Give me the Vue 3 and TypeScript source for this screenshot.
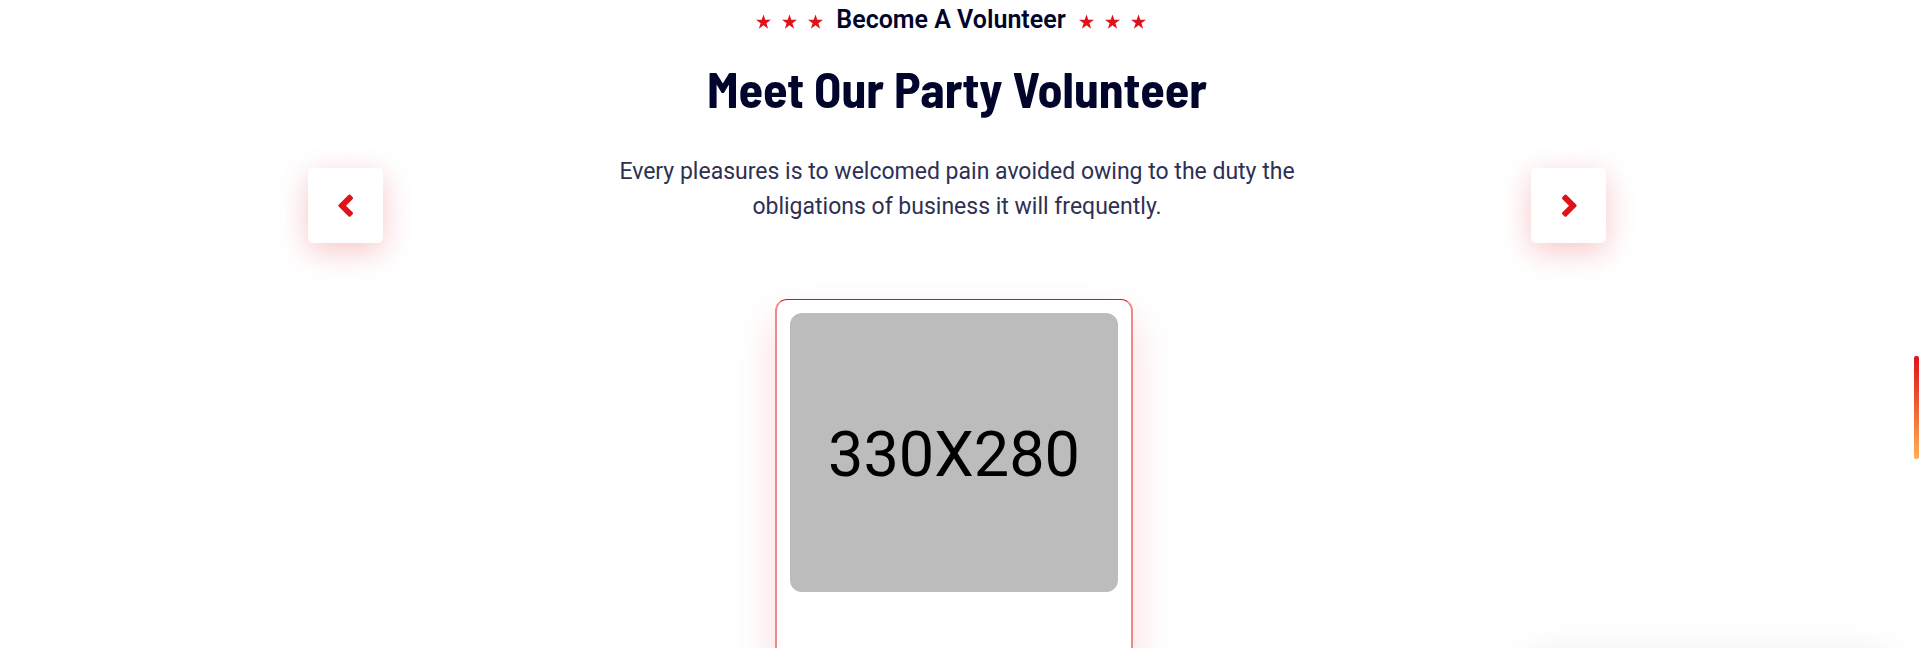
<script setup lang="ts">
import { ref } from 'vue'

interface Volunteer {
  id: number
  photo: string
}

const volunteers: Volunteer[] = [{ id: 1, photo: '330X280' }]
const current = ref(0)

function step(delta: number): void {
  current.value = (current.value + delta + volunteers.length) % volunteers.length
}
</script>

<template>
  <div class="page">
    <main class="volunteers">
      <header class="top">
        <button class="nav" type="button" aria-label="Previous volunteer" @click="step(-1)">
          <svg viewBox="0 0 16 24" aria-hidden="true">
            <path d="M.9 10.6 10.4 1.1q1.1-1.1 2.2 0l1.9 1.9q1.1 1.1 0 2.2L8 11.7l6.5 6.5q1.1 1.1 0 2.2l-1.9 1.9q-1.1 1.1-2.2 0L.9 12.8q-1.1-1.1 0-2.2z" />
          </svg>
        </button>

        <div class="intro">
          <p class="subtitle">
            <span class="stars" aria-hidden="true">
              <svg v-for="n in 3" :key="n" viewBox="0 0 24 24">
                <path d="M12 .6l2.83 8.7H24l-7.4 5.4 2.8 8.7-7.4-5.4-7.4 5.4 2.8-8.7L0 9.3h9.17z" />
              </svg>
            </span>
            <span>Become A Volunteer</span>
            <span class="stars" aria-hidden="true">
              <svg v-for="n in 3" :key="n" viewBox="0 0 24 24">
                <path d="M12 .6l2.83 8.7H24l-7.4 5.4 2.8 8.7-7.4-5.4-7.4 5.4 2.8-8.7L0 9.3h9.17z" />
              </svg>
            </span>
          </p>
          <h2>Meet Our Party Volunteer</h2>
          <p class="text">
            Every pleasures is to welcomed pain avoided owing to the duty the obligations of
            business it will frequently.
          </p>
        </div>

        <button class="nav" type="button" aria-label="Next volunteer" @click="step(1)">
          <svg viewBox="0 0 16 24" aria-hidden="true">
            <path d="M15.1 10.6 5.6 1.1q-1.1-1.1-2.2 0L1.5 3q-1.1 1.1 0 2.2L8 11.7l-6.5 6.5q-1.1 1.1 0 2.2l1.9 1.9q1.1 1.1 2.2 0l9.5-9.5q1.1-1.1 0-2.2z" />
          </svg>
        </button>
      </header>

      <article class="card">
        <div class="photo">{{ volunteers[current].photo }}</div>
      </article>
    </main>
    <div class="scroll-thumb"></div>
    <div class="popup"></div>
  </div>
</template>

<style>
body {
  margin: 0;
  background: #fff;
}
</style>

<style scoped>
.page {
  position: relative;
  height: 100vh;
  overflow: hidden;
  padding-right: 5px;
  box-sizing: border-box;
  background: #fff;
  font-family: Roboto, 'Liberation Sans', sans-serif;
  color: #02052b;
}

.volunteers {
  max-width: 1298px;
  margin: 0 auto;
}

.top {
  display: grid;
  grid-template-columns: 75px minmax(0, 1fr) 75px;
  align-items: end;
  min-height: 243px;
}

.intro {
  align-self: start;
  text-align: center;
}

.subtitle {
  display: flex;
  justify-content: center;
  align-items: center;
  gap: 13px;
  margin: 0;
  padding-right: 12px;
  font-size: 25px;
  line-height: 40px;
  font-weight: 600;
}

.stars {
  display: flex;
  gap: 11px;
  padding-top: 3px;
}

.stars svg {
  width: 15px;
  height: 15px;
  fill: #df1119;
}

h2 {
  margin: 17px 0 35px;
  font-family: 'Barlow Semi Condensed', 'Roboto Condensed', 'Liberation Sans Narrow', Barlow, Roboto, sans-serif;
  font-size: 50px;
  line-height: 62px;
  font-weight: 700;
}

.text {
  max-width: 700px;
  margin: 0 auto;
  font-size: 23px;
  line-height: 35px;
  color: #2e3054;
}

.nav {
  display: flex;
  align-items: center;
  justify-content: center;
  width: 75px;
  height: 75px;
  padding: 0;
  border: 0;
  border-radius: 5px;
  background: #fff;
  box-shadow: 0 8px 30px rgba(223, 17, 25, 0.24);
  cursor: pointer;
}

.nav svg {
  width: 16px;
  height: 24px;
  fill: #df1119;
}

.card {
  box-sizing: border-box;
  width: 358px;
  height: 500px;
  margin: 56px auto 0;
  padding: 13px;
  border: 2px solid #ef888c;
  border-top: 1px solid #df1119;
  border-radius: 12px;
  background: #fff;
  box-shadow: 0 20px 40px rgba(223, 17, 25, 0.16);
  position: relative;
  left: -3px;
}

.photo {
  display: flex;
  align-items: center;
  justify-content: center;
  box-sizing: border-box;
  height: 279px;
  padding-top: 3px;
  border-radius: 12px;
  background: #bcbcbc;
  color: #000;
  font-size: 63px;
}

.scroll-thumb {
  position: absolute;
  top: 356px;
  right: 0;
  width: 5px;
  height: 103px;
  border-radius: 2px;
  background: linear-gradient(#df1119, #ffb254);
}

.popup {
  position: absolute;
  top: 100%;
  right: 30px;
  width: 360px;
  height: 100px;
  margin-top: 12px;
  border-radius: 8px;
  box-shadow: 0 0 40px rgba(0, 0, 0, 0.12);
}
</style>
